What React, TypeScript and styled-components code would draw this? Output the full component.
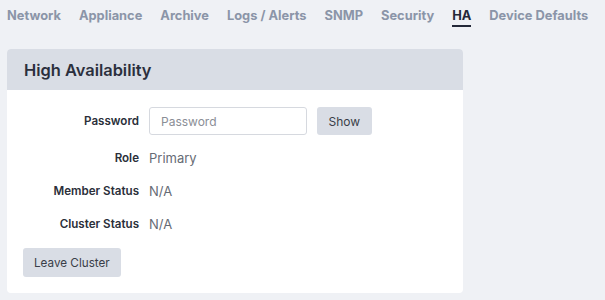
import React from 'react';
import styled, { createGlobalStyle } from 'styled-components';

const GlobalStyle = createGlobalStyle`
  html, body {
    margin: 0;
    padding: 0;
    background: #eff1f5;
    font-family: Inter, 'Noto Sans', sans-serif;
  }
`;

const tabs = ['Network', 'Appliance', 'Archive', 'Logs / Alerts', 'SNMP', 'Security', 'HA', 'Device Defaults'];

const App = () => {
  return (
    <>
      <GlobalStyle />
      <TabNav>
        {tabs.map((t) => (
          <Tab key={t} $active={t === 'HA'}>
            {t}
          </Tab>
        ))}
      </TabNav>
      <Card>
        <CardHeader>High Availability</CardHeader>
        <CardBody>
          <FormGrid>
            <Label>Password</Label>
            <Field>
              <PasswordInput type="password" placeholder="Password" />
              <Button>Show</Button>
            </Field>
            <Label>Role</Label>
            <Value>Primary</Value>
            <Label>Member Status</Label>
            <Value>N/A</Value>
            <Label>Cluster Status</Label>
            <Value>N/A</Value>
          </FormGrid>
          <Button $wide>Leave Cluster</Button>
        </CardBody>
      </Card>
    </>
  );
};

export default App;

const TabNav = styled.nav`
  display: flex;
  gap: 18px;
  padding: 8px 7px 0;
`;

const Tab = styled.div<{ $active?: boolean }>`
  font-size: 12.85px;
  line-height: 16px;
  font-weight: 700;
  color: ${(p) => (p.$active ? '#232838' : '#8b95a8')};
  padding-bottom: 1px;
  border-bottom: 2px solid ${(p) => (p.$active ? '#232838' : 'transparent')};
  white-space: nowrap;
`;

const Card = styled.section`
  width: 456px;
  margin: 22px 0 0 7px;
  background: #ffffff;
  border-radius: 4px;
  overflow: hidden;
`;

const CardHeader = styled.h2`
  margin: 0;
  height: 41px;
  display: flex;
  align-items: center;
  padding: 0 17px;
  background: #d9dde5;
  color: #2b2f3d;
  font-size: 16.4px;
  font-weight: 600;
`;

const CardBody = styled.div`
  padding: 17px 16px 16px;
  display: flex;
  flex-direction: column;
  align-items: flex-start;
  gap: 14px;
`;

const FormGrid = styled.div`
  display: grid;
  grid-template-columns: 116px auto;
  grid-template-rows: 28px;
  grid-auto-rows: 20px;
  column-gap: 10px;
  row-gap: 13px;
  align-items: center;
`;

const Label = styled.div`
  text-align: right;
  font-size: 11.6px;
  font-weight: 600;
  color: #2b2f3a;
  white-space: nowrap;
`;

const Value = styled.div`
  font-size: 13px;
  color: #666b75;
`;

const Field = styled.div`
  display: flex;
  gap: 10px;
  align-items: center;
`;

const PasswordInput = styled.input`
  box-sizing: border-box;
  width: 158px;
  height: 28px;
  border: 1px solid #d6d9df;
  border-radius: 3px;
  padding: 0 11px;
  font-family: Inter, 'Noto Sans', sans-serif;
  font-size: 12px;
  outline: none;
  &::placeholder {
    color: #8a8e96;
  }
`;

const Button = styled.button<{ $wide?: boolean }>`
  box-sizing: border-box;
  height: ${(p) => (p.$wide ? '29px' : '28px')};
  padding: 0 ${(p) => (p.$wide ? '11px' : '11.5px')};
  border: none;
  border-radius: 3px;
  background: #d9dde5;
  color: #3a3e48;
  font-family: Inter, 'Noto Sans', sans-serif;
  font-size: ${(p) => (p.$wide ? '11.7px' : '12px')};
  cursor: pointer;
`;
